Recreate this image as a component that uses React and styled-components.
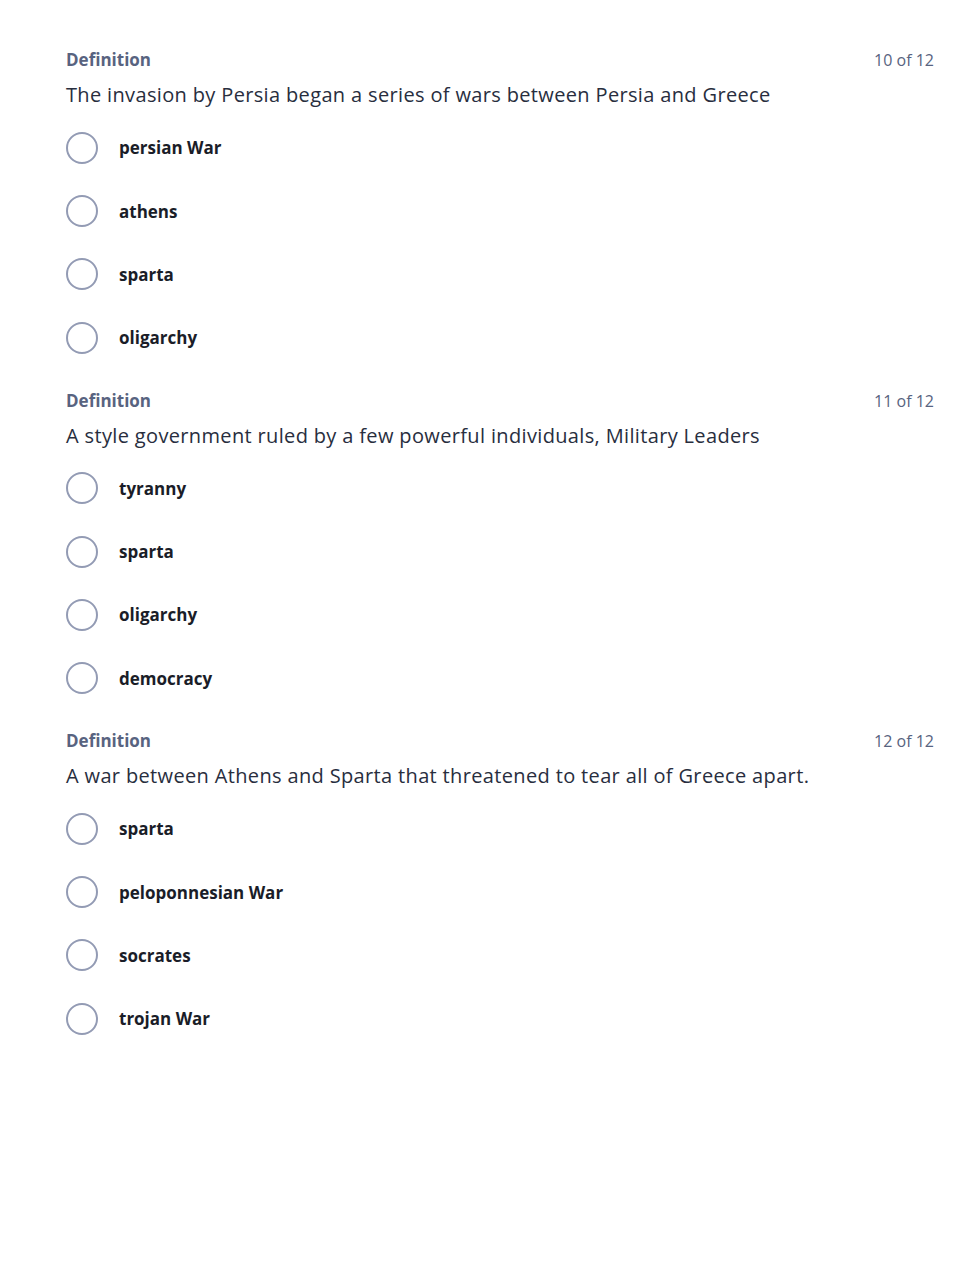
import React from 'react'
import styled, { createGlobalStyle } from 'styled-components'

const GlobalStyle = createGlobalStyle`
  html, body {
    margin: 0;
    padding: 0;
    background: #fff;
  }
  body {
    font-family: "Open Sans", Lato, sans-serif;
    color: #282e3e;
  }
`;

const Page = styled.div`
  display: flex;
  flex-direction: column;
  padding: 48px 45px 0 66px;
`;

const Section = styled.section`
  display: flex;
  flex-direction: column;
  height: 340.5px;
`;

const Header = styled.div`
  display: flex;
  justify-content: space-between;
  align-items: baseline;
  height: 24px;
`;

const Label = styled.div`
  font-size: 17px;
  font-weight: 700;
  color: #586380;
`;

const Counter = styled.div`
  font-size: 16px;
  color: #586380;
`;

const Prompt = styled.div`
  margin-top: 10px;
  font-size: 20px;
  line-height: 26px;
  letter-spacing: 0.35px;
  color: #282e3e;
`;

const Options = styled.div`
  display: flex;
  flex-direction: column;
  margin-top: 8px;
`;

const Option = styled.label`
  display: flex;
  align-items: center;
  height: 63.4px;
  cursor: pointer;
`;

const Radio = styled.span`
  box-sizing: border-box;
  width: 32px;
  height: 32px;
  border-radius: 50%;
  border: 2.5px solid #939bb4;
  flex-shrink: 0;
`;

const OptionText = styled.span`
  margin-left: 21px;
  font-size: 17px;
  font-weight: 700;
  color: #1a1d28;
`;

const questions = [
  {
    n: 10,
    prompt: 'The invasion by Persia began a series of wars between Persia and Greece',
    options: ['persian War', 'athens', 'sparta', 'oligarchy'],
  },
  {
    n: 11,
    prompt: 'A style government ruled by a few powerful individuals, Military Leaders',
    options: ['tyranny', 'sparta', 'oligarchy', 'democracy'],
  },
  {
    n: 12,
    prompt: 'A war between Athens and Sparta that threatened to tear all of Greece apart.',
    options: ['sparta', 'peloponnesian War', 'socrates', 'trojan War'],
  },
]

const App = () => (
  <>
    <GlobalStyle />
    <Page>
      {questions.map(q => (
        <Section key={q.n}>
          <Header>
            <Label>Definition</Label>
            <Counter>{q.n} of 12</Counter>
          </Header>
          <Prompt>{q.prompt}</Prompt>
          <Options>
            {q.options.map(o => (
              <Option key={o}>
                <Radio />
                <OptionText>{o}</OptionText>
              </Option>
            ))}
          </Options>
        </Section>
      ))}
    </Page>
  </>
)

export default App
